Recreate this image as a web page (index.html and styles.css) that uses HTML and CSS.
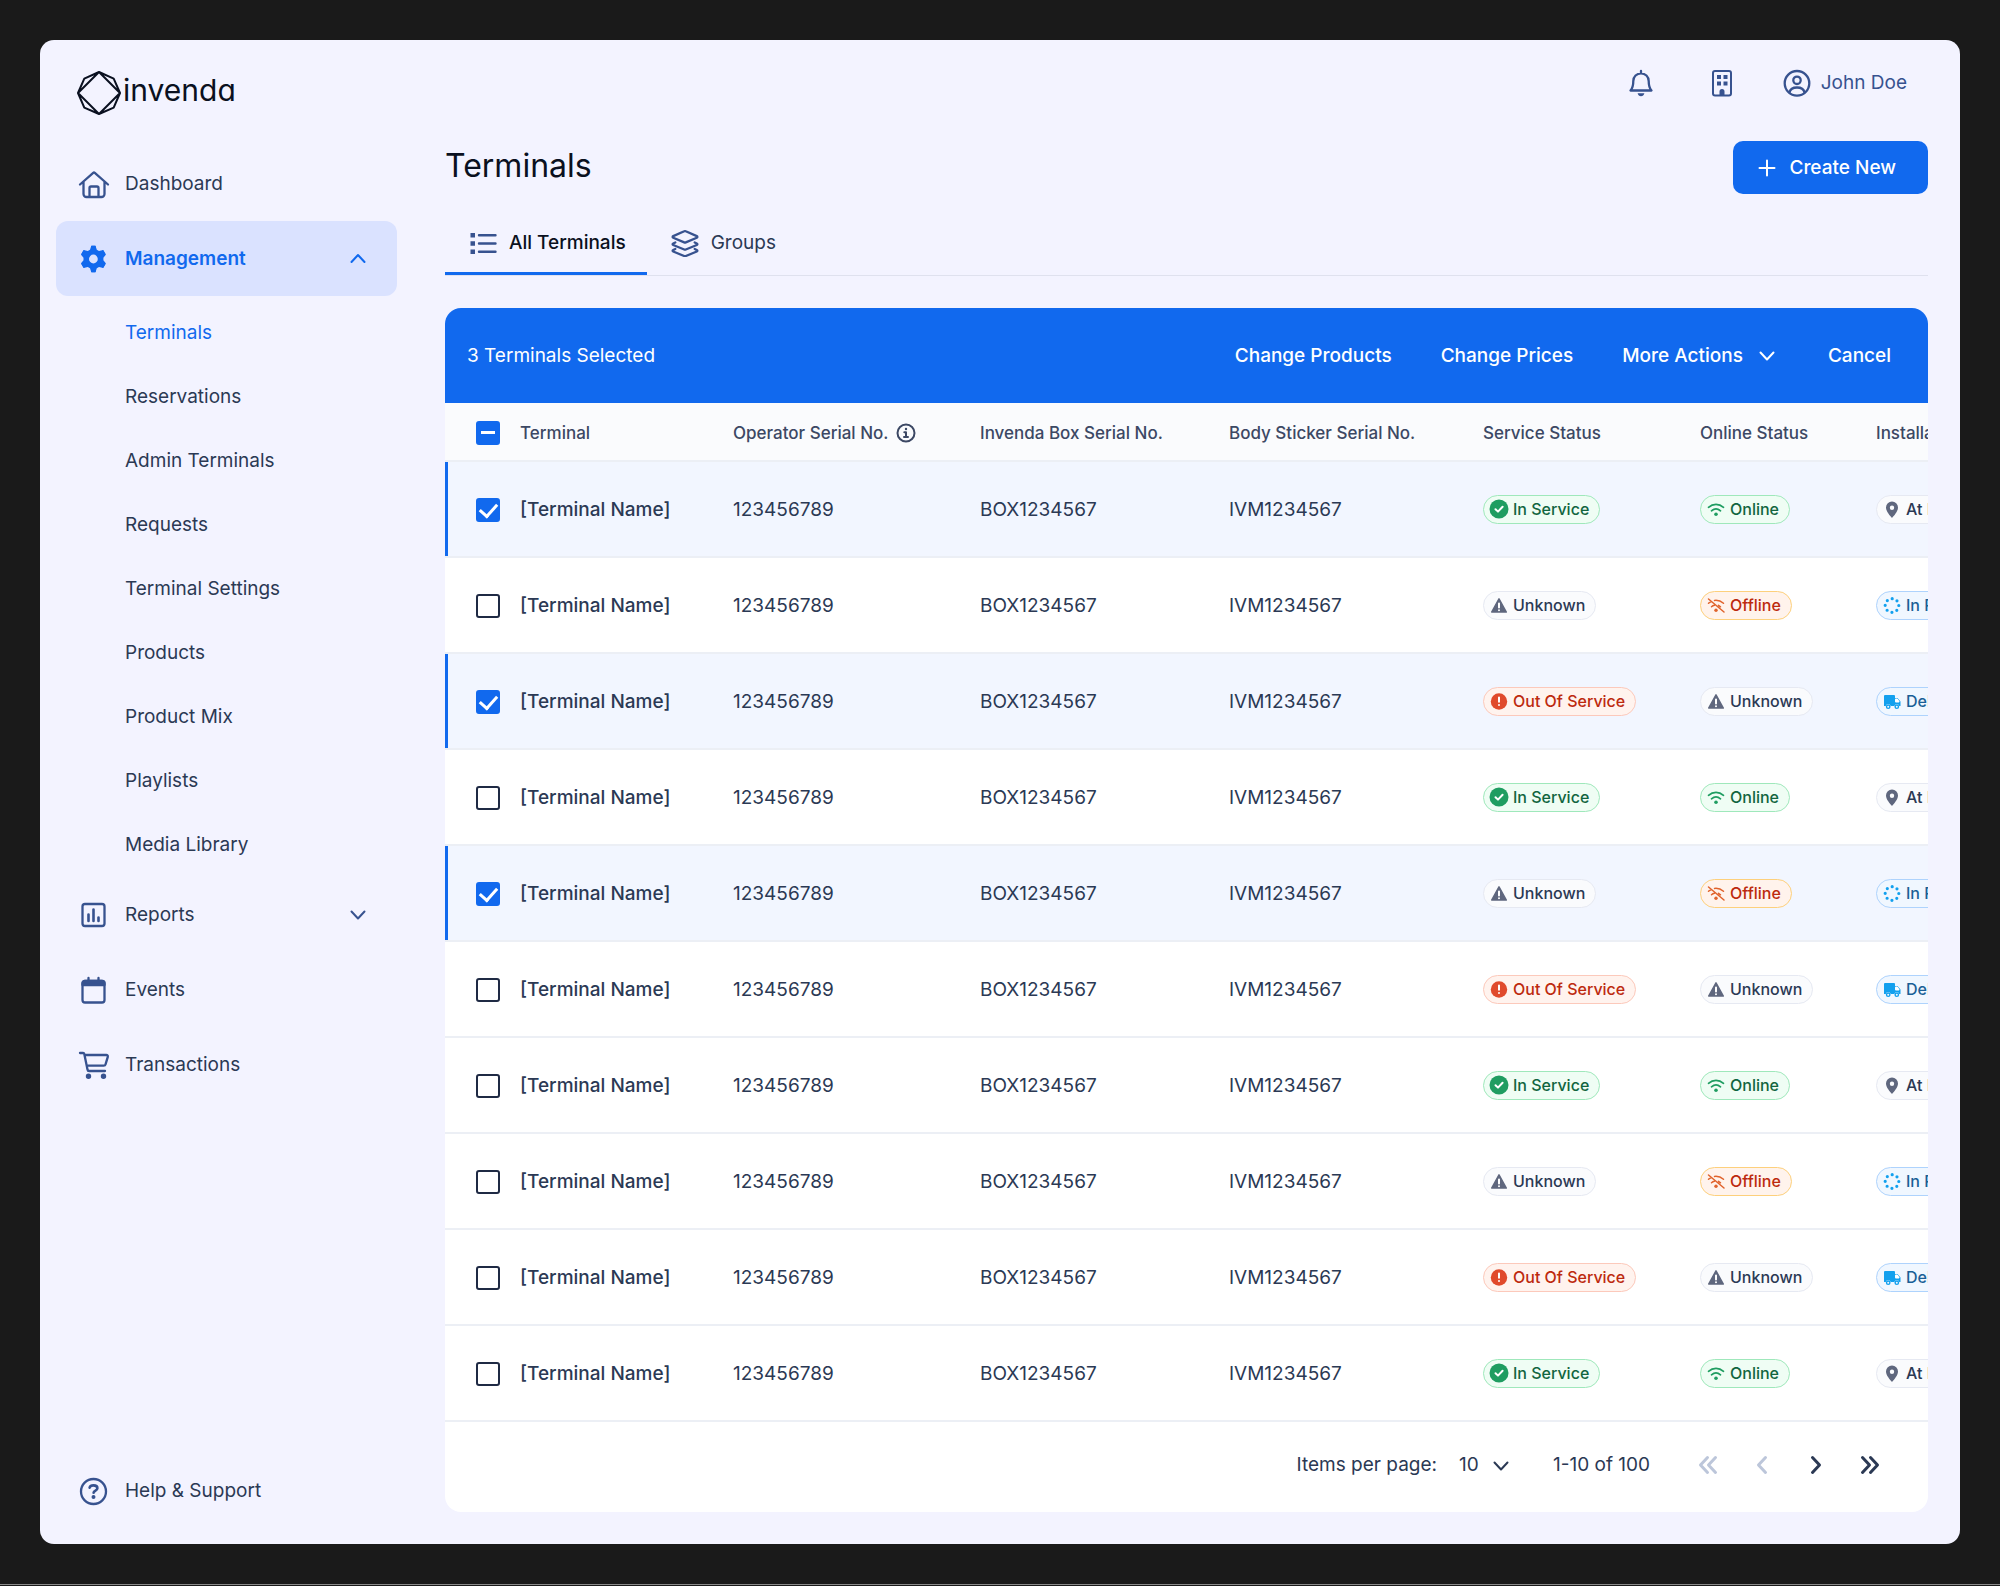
FILE: index.html
```html
<!DOCTYPE html>
<html lang="en">
<head>
  <meta charset="UTF-8">
  <meta name="viewport" content="width=device-width, initial-scale=1.0">
  <title>Terminals - invenda</title>
  <link rel="stylesheet" href="styles.css">
</head>
<body>
  <!-- Icon sprite -->
  <svg class="sprite" aria-hidden="true">
    <symbol id="i-home" viewBox="0 0 32 32">
      <path stroke-width="2.3" d="M2 16.5 15.2 4.8a1.2 1.2 0 0 1 1.600 0L30 16.500M5.500 14v12a3 3 0 0 0 3 3h15a3 3 0 0 0 3-3V14M11.500 29v-9a1.500 1.500 0 0 1 1.500-1.500h6a1.500 1.500 0 0 1 1.500 1.500v9"/>
    </symbol>
    <symbol id="i-gear" viewBox="0 0 32 32">
      <path fill="currentColor" stroke="none" fill-rule="evenodd" d="M13.3 2.8h4.2l1.3 3.9 2.2 1.3 4.2-.9 2.6 4.6-2.4 3v2.6l2.4 3-2.6 4.6-4.2-.9-2.2 1.3-1.3 3.9h-4.2L12 25.300l-2.2-1.3-4.200.9L3 20.300l2.500-3v-2.600L3 11.700l2.600-4.600 4.200.9L12 6.700ZM15.400 11.600a4.400 4.400 0 1 0 0 8.800 4.400 4.400 0 0 0 0-8.800Z"/>
      <path stroke-width="1.5" d="M13.800 3.500h3.200M25 8l1.800 3.200M26.800 20.800 25 24M17 28.500h-3.200M5.900 24l-1.800-3.200M4.100 11.200 5.900 8"/>
    </symbol>
    <symbol id="i-chart" viewBox="0 0 32 32">
      <rect x="4.500" y="5" width="22" height="22" rx="2.500" stroke-width="2.3"/>
      <path stroke-width="2.600" d="M10.500 15.500V22M15.500 10.500V22M20.500 18.500V22"/>
    </symbol>
    <symbol id="i-calendar" viewBox="0 0 32 32">
      <rect x="4.500" y="7" width="22" height="21.500" rx="2.500" stroke-width="2.3"/>
      <path fill="currentColor" stroke-width="2.300" d="M4.500 11V9.500A2.500 2.500 0 0 1 7 7h17a2.500 2.500 0 0 1 2.500 2.500V11ZM10.500 4V8M20.500 4V8"/>
    </symbol>
    <symbol id="i-cart" viewBox="0 0 32 32">
      <path stroke-width="2.3" d="M2 4h3a1.300 1.300 0 0 1 1.300 1l3.200 15.500A1.700 1.700 0 0 0 11.200 22H27M6.700 6h21.600A1.500 1.500 0 0 1 29.800 7.900L27.600 15.200A2 2 0 0 1 25.700 16.700H9"/>
      <circle cx="10.500" cy="27.300" r="1.700" fill="currentColor"/>
      <circle cx="25.500" cy="27.300" r="1.700" fill="currentColor"/>
    </symbol>
    <symbol id="i-help" viewBox="0 0 32 32">
      <circle cx="15.500" cy="16.500" r="12.500" stroke-width="2.3"/>
      <path stroke-width="2.600" d="M11.600 12.700c.5-1.700 2-2.300 3.900-2.300 2.200 0 3.900 1 3.900 2.900 0 2.300-3.800 2.200-3.800 4.500"/>
      <circle cx="15.500" cy="21.900" r="1" fill="currentColor"/>
    </symbol>
    <symbol id="i-down" viewBox="0 0 24 24"><path d="m5.500 8.500 6.500 7 6.500-7"/></symbol>
    <symbol id="i-up" viewBox="0 0 24 24"><path d="m5.500 15 6.500-7 6.500 7"/></symbol>
    <symbol id="i-bell" viewBox="0 0 28 28">
      <path stroke-width="2.300" d="M3.500 21.500c2-2.200 2.800-4.700 2.800-9.500a7.700 7.700 0 0 1 15.400 0c0 4.800.8 7.300 2.800 9.500ZM14 4V2"/>
      <path fill="currentColor" stroke="none" d="M10.600 24.300h6.800c-.5 2-1.700 3-3.400 3s-2.900-1-3.400-3Z"/>
    </symbol>
    <symbol id="i-building" viewBox="0 0 28 28">
      <rect x="5" y="2" width="18" height="24.500" rx="2"/>
      <path fill="currentColor" stroke="none" d="M9 6h4v4H9zM15.500 6h4v4h-4zM9 12.500h4v4H9zM15.500 12.500h4v4h-4zM11.500 26v-3.500a2.500 2.500 0 0 1 5 0V26Z"/>
    </symbol>
    <symbol id="i-user" viewBox="0 0 28 28">
      <g stroke-width="2.300">
        <circle cx="14" cy="14.300" r="12.300"/>
        <circle cx="14" cy="11.300" r="3.700"/>
        <path d="M6.500 23.500c.6-2.900 3-5 7.500-5s6.900 2.100 7.500 5"/>
      </g>
    </symbol>
    <symbol id="i-plus" viewBox="0 0 20 20"><path d="M10 2.500v15M2.500 10h15"/></symbol>
    <symbol id="i-list" viewBox="0 0 28 28">
      <path fill="currentColor" stroke="none" d="M1.500 4h4.500v4.500H1.500zM1.500 12.200h4.500v4.500H1.500zM1.500 20.500h4.500V25H1.500z"/>
      <path stroke-width="2.400" d="M10 6.300h16.500M10 14.500h16.500M10 22.700h16.500"/>
    </symbol>
    <symbol id="i-layers" viewBox="0 0 28 28">
      <path stroke-width="2.300" d="M13.200 2.300a1.800 1.800 0 0 1 1.600 0l11 4.800c.8.400.8 1.200 0 1.600l-11 4.700a1.800 1.800 0 0 1-1.600 0L2.200 8.700c-.8-.4-.8-1.200 0-1.600ZM4.300 13.500l-2.100 1c-.8.400-.8 1.100 0 1.500l11 4.500a1.800 1.800 0 0 0 1.600 0l11-4.500c.8-.4.8-1.100 0-1.500l-2.100-1M4.300 20l-2.100 1c-.8.400-.8 1.100 0 1.500l11 4.500a1.800 1.800 0 0 0 1.600 0l11-4.500c.8-.4.8-1.100 0-1.500l-2.100-1"/>
    </symbol>
    <symbol id="i-info" viewBox="0 0 20 20">
      <circle cx="10" cy="10" r="8.500"/>
      <path d="M8.300 9.200H10v4.500M8 14h4"/>
      <circle cx="10" cy="6" r="1.200" fill="currentColor" stroke="none"/>
    </symbol>
    <symbol id="i-left" viewBox="0 0 28 28"><path d="m17.500 6.500-7 7.500 7 7.500"/></symbol>
    <symbol id="i-right" viewBox="0 0 28 28"><path d="m10.500 6.500 7 7.500-7 7.500"/></symbol>
    <symbol id="i-first" viewBox="0 0 28 28"><path d="m13.500 6.500-7 7.500 7 7.500M21.500 6.500l-7 7.500 7 7.500"/></symbol>
    <symbol id="i-last" viewBox="0 0 28 28"><path d="m6.500 6.500 7 7.500-7 7.500M14.500 6.500l7 7.500-7 7.500"/></symbol>
    <!-- Status icons -->
    <symbol id="i-check" viewBox="0 0 20 20">
      <circle cx="10" cy="10" r="9.500" fill="currentColor" stroke="none"/>
      <path class="knock" d="m6.500 10.200 2.500 2.400 4.600-4.800"/>
    </symbol>
    <symbol id="i-alert" viewBox="0 0 20 20">
      <circle cx="10" cy="10.500" r="8.200" fill="currentColor" stroke="none"/>
      <path class="knock" d="M10 6.500v4.300M10 14v.1"/>
    </symbol>
    <symbol id="i-warn" viewBox="0 0 20 20">
      <path fill="currentColor" stroke-width="1.500" d="M10 3.800 17.300 17H2.700Z"/>
      <path class="knock" d="M10 8.500v4M10 15.200v.1"/>
    </symbol>
    <symbol id="i-wifi" viewBox="0 0 20 20">
      <path stroke-width="1.700" d="M2.500 8.300c4.500-4 10.500-4 15 0M5.500 11.800c2.800-2.400 6.200-2.400 9 0"/>
      <circle cx="10" cy="15.300" r="1.800" fill="currentColor" stroke="none"/>
    </symbol>
    <symbol id="i-nowifi" viewBox="0 0 20 20">
      <path stroke-width="1.500" d="M8.500 5.400c3.300-.4 6.400.6 9 2.900M2.500 8.300c.8-.7 1.700-1.300 2.600-1.700M5.500 11.800c.9-.8 1.900-1.300 2.900-1.500M12.500 10.300l2 1.500M2.500 4l15.500 13"/>
      <circle cx="10" cy="15.300" r="1.700" fill="currentColor" stroke="none"/>
    </symbol>
    <symbol id="i-pin" viewBox="0 0 20 20">
      <path fill="currentColor" stroke="none" fill-rule="evenodd" d="M10 2.500a6 6 0 0 0-6 6c0 3.800 4 8.300 6 10.500 2-2.200 6-6.700 6-10.500a6 6 0 0 0-6-6Zm0 4a2.200 2.200 0 1 1 0 4.400 2.200 2.200 0 0 1 0-4.400Z"/>
    </symbol>
    <symbol id="i-progress" viewBox="0 0 20 20">
      <circle cx="10" cy="10.500" r="6.800" stroke-width="3.200" stroke-dasharray="0 5.340"/>
    </symbol>
    <symbol id="i-truck" viewBox="0 0 20 20">
      <path fill="currentColor" stroke="none" d="M3 4h9a1 1 0 0 1 1 1v2h2.500l3 3.500v4.500h-1.200a2.600 2.600 0 0 0-5 0H8.700a2.600 2.600 0 0 0-5 0H2V5a1 1 0 0 1 1-1Z"/>
      <circle cx="6.200" cy="15.700" r="1.700" stroke-width="1.400"/>
      <circle cx="14.800" cy="15.700" r="1.700" stroke-width="1.400"/>
      <path class="knock" d="M14 8.500h1l1.500 2H14Z"/>
    </symbol>
  </svg>

  <div class="app">
    <!-- Sidebar -->
    <aside class="sidebar">
      <a class="logo" href="#">
        <svg viewBox="0 0 44 44"><path d="M22 1 36.700 7.700 43 22l-6.300 14.700L22 43 7.300 36.700 1 22 7.300 7.700ZM22 1l21 21-21 21L1 22Z"/></svg>
        <span>invenda</span>
      </a>
      <nav class="nav">
        <a class="nav-item" href="#"><svg><use href="#i-home"/></svg>Dashboard</a>
        <button class="nav-item active" aria-expanded="true"><svg><use href="#i-gear"/></svg>Management<svg class="chevron"><use href="#i-up"/></svg></button>
        <div class="subnav">
          <a class="current" href="#">Terminals</a>
          <a href="#">Reservations</a>
          <a href="#">Admin Terminals</a>
          <a href="#">Requests</a>
          <a href="#">Terminal Settings</a>
          <a href="#">Products</a>
          <a href="#">Product Mix</a>
          <a href="#">Playlists</a>
          <a href="#">Media Library</a>
        </div>
        <button class="nav-item" aria-expanded="false"><svg><use href="#i-chart"/></svg>Reports<svg class="chevron"><use href="#i-down"/></svg></button>
        <a class="nav-item" href="#"><svg><use href="#i-calendar"/></svg>Events</a>
        <a class="nav-item" href="#"><svg><use href="#i-cart"/></svg>Transactions</a>
      </nav>
      <a class="nav-item help" href="#"><svg><use href="#i-help"/></svg>Help &amp; Support</a>
    </aside>

    <!-- Main content -->
    <main class="main">
      <header class="topbar">
        <button class="icon-button" aria-label="Notifications"><svg><use href="#i-bell"/></svg></button>
        <button class="icon-button" aria-label="Organization"><svg><use href="#i-building"/></svg></button>
        <button class="user"><svg><use href="#i-user"/></svg>John Doe</button>
      </header>

      <div class="page-head">
        <h1>Terminals</h1>
        <button class="create"><svg><use href="#i-plus"/></svg>Create New</button>
      </div>

      <div class="tabs">
        <a class="tab selected" href="#"><svg><use href="#i-list"/></svg>All Terminals</a>
        <a class="tab" href="#"><svg><use href="#i-layers"/></svg>Groups</a>
      </div>

      <section class="card">
        <div class="selection">
          <span class="count">3 Terminals Selected</span>
          <button>Change Products</button>
          <button>Change Prices</button>
          <button class="more">More Actions<svg><use href="#i-down"/></svg></button>
          <button>Cancel</button>
        </div>

        <div class="table-wrap">
          <table>
            <colgroup>
              <col class="col-check"><col class="col-name"><col class="col-operator"><col class="col-box">
              <col class="col-body"><col class="col-service"><col class="col-online"><col class="col-install">
            </colgroup>
            <thead>
              <tr>
                <th class="check"><input type="checkbox" id="checkAll" aria-label="Select all terminals"></th>
                <th>Terminal</th>
                <th><span class="with-info">Operator Serial No.<svg><use href="#i-info"/></svg></span></th>
                <th>Invenda Box Serial No.</th>
                <th>Body Sticker Serial No.</th>
                <th>Service Status</th>
                <th>Online Status</th>
                <th>Installation Status</th>
              </tr>
            </thead>
            <tbody id="rows"></tbody>
          </table>
        </div>

        <footer class="pager">
          <label for="pageSize">Items per page:</label>
          <span class="page-size">
            <select id="pageSize">
              <option>10</option>
              <option>25</option>
              <option>50</option>
            </select>
            <svg><use href="#i-down"/></svg>
          </span>
          <span class="range">1-10 of 100</span>
          <div class="page-buttons">
            <button disabled aria-label="First page"><svg><use href="#i-first"/></svg></button>
            <button disabled aria-label="Previous page"><svg><use href="#i-left"/></svg></button>
            <button aria-label="Next page"><svg><use href="#i-right"/></svg></button>
            <button aria-label="Last page"><svg><use href="#i-last"/></svg></button>
          </div>
        </footer>
      </section>
    </main>
  </div>

  <script>
    // Each status: text, icon, badge colour
    const statuses = {
      inService: ['In Service', 'check', 'green'],
      outOfService: ['Out Of Service', 'alert', 'red'],
      unknown: ['Unknown', 'warn', 'grey'],
      online: ['Online', 'wifi', 'green'],
      offline: ['Offline', 'nowifi', 'orange'],
      atLocation: ['At Location', 'pin', 'grey'],
      inProgress: ['In Progress', 'progress', 'blue'],
      delivered: ['Delivered', 'truck', 'blue']
    };

    const a = ['inService', 'online', 'atLocation'];
    const b = ['unknown', 'offline', 'inProgress'];
    const c = ['outOfService', 'unknown', 'delivered'];
    const terminals = [a, b, c, a, b, c, a, b, c, a];
    const selected = [0, 2, 4];

    function badge(key) {
      const [text, icon, color] = statuses[key];
      return `<td><span class="badge ${color}"><svg><use href="#i-${icon}"/></svg>${text}</span></td>`;
    }

    document.getElementById('rows').innerHTML = terminals.map((row, i) => {
      const on = selected.includes(i);
      return `<tr${on ? ' class="selected"' : ''}>
        <td class="check"><input type="checkbox" aria-label="Select terminal ${i + 1}"${on ? ' checked' : ''}></td>
        <td class="name">[Terminal Name]</td>
        <td>123456789</td>
        <td>BOX1234567</td>
        <td>IVM1234567</td>
        ${row.map(badge).join('')}
      </tr>`;
    }).join('');

    document.getElementById('checkAll').indeterminate = true;
  </script>
</body>
</html>
```

FILE: styles.css
```css
* {
  box-sizing: border-box;
}
body {
  margin: 0;
  padding: 40px;
  border-bottom: 1px solid #8a8a8a;
  background-color: #1a1a1a;
  color: #2b3954;
  font-family: Inter, "Liberation Sans", sans-serif;
  font-size: 19px;
  line-height: 24px;
}
a {
  color: inherit;
  text-decoration: none;
}
button {
  padding: 0;
  border: none;
  background: none;
  color: inherit;
  font: inherit;
  cursor: pointer;
}
svg {
  display: block;
  flex: none;
  fill: none;
  stroke: currentColor;
  stroke-width: 2;
  stroke-linecap: round;
  stroke-linejoin: round;
}
.sprite {
  position: absolute;
  width: 0;
  height: 0;
}
.app {
  display: grid;
  grid-template-columns: 341px minmax(0, 1fr);
  gap: 48px;
  padding: 0 32px 32px 16px;
  border-radius: 14px;
  background-color: #f3f3ff;
}

/* Sidebar */
.sidebar {
  display: flex;
  flex-direction: column;
}
.logo {
  display: flex;
  align-items: center;
  gap: 2px;
  height: 106px;
  padding-left: 21px;
  color: #0a1020;
  font-size: 30px;
  line-height: 36px;
  font-feature-settings: "cv11";
}
.logo span {
  padding-bottom: 6px;
}
.logo svg {
  width: 44px;
  height: 44px;
}
.nav-item {
  display: flex;
  align-items: center;
  gap: 15px;
  width: 100%;
  height: 75px;
  padding: 0 27px 0 22px;
  border-radius: 12px;
}
.nav-item svg {
  width: 32px;
  height: 32px;
  color: #37528f;
}
.nav-item .chevron {
  width: 24px;
  height: 24px;
  margin-left: auto;
}
.nav-item.active {
  background-color: #dae2ff;
  color: #1169ee;
  font-weight: 600;
}
.nav-item.active svg {
  color: #1169ee;
}
.subnav {
  padding-top: 5px;
}
.subnav a {
  display: flex;
  align-items: center;
  height: 64px;
  padding-left: 69px;
}
.subnav .current {
  color: #1169ee;
}
.help {
  margin-top: auto;
  margin-bottom: -16px;
}

/* Header */
.main {
  padding-top: 23px;
}
.topbar {
  display: flex;
  justify-content: flex-end;
  gap: 41px;
  padding-right: 21px;
  color: #37528f;
}
.topbar svg {
  width: 28px;
  height: 28px;
}
.icon-button {
  display: flex;
  align-items: center;
  justify-content: center;
  width: 40px;
  height: 40px;
}
.user {
  display: flex;
  align-items: center;
  gap: 10px;
}
.page-head {
  display: flex;
  align-items: center;
  justify-content: space-between;
  margin-top: 38px;
}
h1 {
  margin: 0;
  padding-bottom: 4px;
  color: #0a1020;
  font-size: 32px;
  font-weight: 400;
  line-height: 40px;
}
.create {
  display: flex;
  align-items: center;
  gap: 12px;
  height: 53px;
  padding: 0 32px 0 24px;
  border-radius: 10px;
  background-color: #1169ee;
  color: white;
  font-weight: 500;
}
.create svg {
  width: 20px;
  height: 20px;
}
.tabs {
  display: flex;
  margin-top: 17px;
  border-bottom: 1px solid #dfe1ee;
}
.tab {
  display: flex;
  align-items: center;
  gap: 12px;
  height: 64px;
  padding: 0 21px 0 24px;
}
.tab svg {
  width: 28px;
  height: 28px;
  color: #37528f;
}
.tab.selected {
  box-shadow: inset 0 -3px #1169ee;
  color: #0a1020;
  font-weight: 500;
}

/* Card */
.card {
  margin-top: 32px;
  overflow: hidden;
  border-radius: 16px;
  background-color: white;
}
.selection {
  display: flex;
  align-items: center;
  gap: 49px;
  height: 95px;
  padding: 0 37px 0 22px;
  background-color: #1169ee;
  color: white;
}
.selection .count {
  margin-right: auto;
}
.selection button {
  font-weight: 500;
}
.selection .more {
  display: flex;
  align-items: center;
  gap: 12px;
}
.selection svg {
  width: 24px;
  height: 24px;
}

/* Table */
.table-wrap {
  overflow: hidden;
}
table {
  width: 1640px;
  border-collapse: separate;
  border-spacing: 0;
  table-layout: fixed;
}
.col-check { width: 75px; }
.col-name { width: 213px; }
.col-operator { width: 247px; }
.col-box { width: 249px; }
.col-body { width: 254px; }
.col-service { width: 217px; }
.col-online { width: 176px; }
th, td {
  padding: 2px 0 0;
  border-bottom: 2px solid #eceff5;
  text-align: left;
  white-space: nowrap;
}
th {
  height: 59px;
  background-color: #fafbfd;
  color: #3c4864;
  font-size: 17px;
  font-weight: 500;
}
td {
  height: 96px;
}
td.name {
  font-weight: 500;
}
.check {
  padding-left: 31px;
}
tr.selected {
  background-color: #f2f6ff;
}
tr.selected .check {
  box-shadow: inset 3px 0 #1169ee;
}
.with-info {
  display: flex;
  align-items: center;
  gap: 8px;
}
.with-info svg {
  width: 20px;
  height: 20px;
}
input[type="checkbox"] {
  display: grid;
  place-items: center;
  width: 24px;
  height: 24px;
  margin: 0;
  appearance: none;
  border: 2px solid #1f2a44;
  border-radius: 3px;
}
input[type="checkbox"]:checked,
input[type="checkbox"]:indeterminate {
  border-color: #1169ee;
  background-color: #1169ee;
}
input[type="checkbox"]:checked::before {
  content: "";
  width: 8px;
  height: 14px;
  margin-top: -4px;
  border: solid white;
  border-width: 0 3px 3px 0;
  transform: rotate(42deg);
}
input[type="checkbox"]:indeterminate::before {
  content: "";
  width: 14px;
  height: 3px;
  background-color: white;
}

/* Badges */
.badge {
  display: inline-flex;
  align-items: center;
  gap: 4px;
  height: 29px;
  padding: 0 10px 0 5px;
  border: 1px solid;
  border-radius: 15px;
  font-size: 16px;
  font-weight: 500;
  line-height: 20px;
}
.badge svg {
  width: 20px;
  height: 20px;
}
.knock {
  stroke: white;
}
.green {
  border-color: #9fe8bb;
  background-color: #effdf4;
  color: #12653f;
}
.green svg { color: #1f9d61; }
.red {
  border-color: #fcc9bb;
  background-color: #fff3ee;
  color: #bd2a0e;
}
.red svg { color: #e04a2c; }
.orange {
  border-color: #fdd07c;
  background-color: #fff3ec;
  color: #bd2a0e;
}
.orange svg { color: #e0632c; }
.grey {
  border-color: #e6e9f2;
  background-color: #fafbfd;
}
.grey svg { color: #5f677e; }
.blue {
  border-color: #aed3fd;
  background-color: #f0f7ff;
  color: #1a5f96;
}
.blue svg { color: #12a0ee; }

/* Pager */
.pager {
  display: flex;
  align-items: center;
  justify-content: flex-end;
  height: 90px;
  padding: 0 44px 4px 0;
}
.page-size {
  position: relative;
  margin: 0 40px 0 22px;
}
.page-size select {
  width: 54px;
  height: 32px;
  padding: 0;
  appearance: none;
  border: none;
  background: none;
  color: inherit;
  font: inherit;
}
.page-size svg {
  position: absolute;
  top: 5px;
  right: 0;
  width: 24px;
  height: 24px;
  pointer-events: none;
}
.page-buttons {
  display: flex;
  gap: 26px;
  margin-left: 44px;
}
.page-buttons svg {
  width: 28px;
  height: 28px;
  stroke-width: 3;
}
.page-buttons button:disabled {
  color: #bcc6da;
}
```
